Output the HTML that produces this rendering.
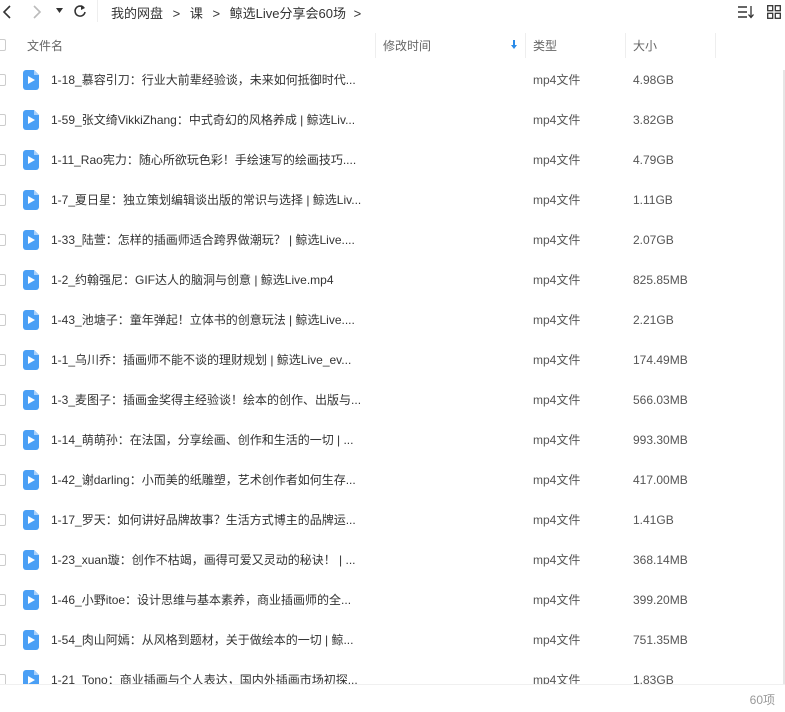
<!DOCTYPE html>
<html><head><meta charset="utf-8"><style>
*{margin:0;padding:0;box-sizing:border-box}
body{width:785px;height:712px;overflow:hidden;background:#fff;font-family:"Liberation Sans","Noto Sans CJK SC",sans-serif;color:#333;position:relative}
.top{position:absolute;top:0;left:0;right:0;height:24px;font-size:13px}
.hdr{position:absolute;top:33px;left:0;width:785px;height:25px;font-size:12px;color:#666}
.hdr span{position:absolute;top:4px;line-height:18px}
.sep{position:absolute;top:0;width:1px;height:25px;background:#eee}
.row{position:absolute;left:0;width:785px;height:40px;font-size:12px}
.row .cb{position:absolute;left:-6px;top:14px;width:12px;height:12px;border:1px solid #ccc;border-radius:2px}
.row svg{position:absolute;left:23px;top:10px}
.row span{position:absolute;top:11px;line-height:18px;height:18px}
.row .n{left:51px;color:#333}
.row .t{left:533px;color:#555}
.row .s{left:633px;color:#555}
.foot{position:absolute;left:0;top:684px;width:785px;height:28px;background:#fff;border-top:1px solid #f0f0f0}
</style></head><body>
<div class="top">
<svg style="position:absolute;left:2px;top:4px" width="10" height="16"><path d="M8 2L2 8L8 14" stroke="#333" stroke-width="1.6" fill="none"/></svg>
<svg style="position:absolute;left:32px;top:4px" width="10" height="16"><path d="M2 2L8 8L2 14" stroke="#bbb" stroke-width="1.6" fill="none"/></svg>
<svg style="position:absolute;left:56px;top:8px" width="8" height="6"><path d="M0 0H7L3.5 5Z" fill="#333"/></svg>
<svg style="position:absolute;left:73px;top:4px" width="14" height="14"><path d="M11 4A5 5 0 1 0 12 8" stroke="#333" stroke-width="1.6" fill="none"/><path d="M8 1L12 4L8 6" fill="#333"/></svg>
<div style="position:absolute;left:97px;top:0;width:1px;height:22px;background:#eee"></div>
<span style="position:absolute;left:111px;top:3px">我的网盘 <b style="font-weight:normal;margin:0 6px">&gt;</b> 课 <b style="font-weight:normal;margin:0 6px">&gt;</b> 鲸选Live分享会60场 <b style="font-weight:normal;margin-left:4px">&gt;</b></span>
<svg style="position:absolute;left:738px;top:5px" width="16" height="14"><path d="M0 2H9M0 7H9M0 12H9" stroke="#333" stroke-width="1.4"/><path d="M13 1V12M10.5 9.5L13 12.5L15.5 9.5" stroke="#333" stroke-width="1.3" fill="none"/></svg>
<svg style="position:absolute;left:767px;top:5px" width="14" height="14"><rect x="0.7" y="0.7" width="5" height="5" stroke="#333" fill="none" stroke-width="1.3"/><rect x="8.3" y="0.7" width="5" height="5" stroke="#333" fill="none" stroke-width="1.3"/><rect x="0.7" y="8.3" width="5" height="5" stroke="#333" fill="none" stroke-width="1.3"/><rect x="8.3" y="8.3" width="5" height="5" stroke="#333" fill="none" stroke-width="1.3"/></svg>
</div>
<div class="hdr">
<div style="position:absolute;left:-6px;top:6px;width:12px;height:12px;border:1px solid #ccc;border-radius:2px"></div>
<span style="left:27px">文件名</span>
<div class="sep" style="left:375px"></div>
<span style="left:383px">修改时间</span>
<svg style="position:absolute;left:511px;top:7px" width="6" height="10"><path d="M3 0V6" stroke="#2a8be8" stroke-width="2"/><path d="M0 5H6L3 9Z" fill="#2a8be8"/></svg>
<div class="sep" style="left:525px"></div>
<span style="left:533px">类型</span>
<div class="sep" style="left:625px"></div>
<span style="left:633px">大小</span>
<div class="sep" style="left:715px"></div>
</div>
<div id="rows"></div>
<div class="foot"><span style="position:absolute;right:10px;top:6px;font-size:12px;color:#999">60项</span></div>
<div style="position:absolute;right:0;top:70px;width:2px;height:614px;background:#e6e6e6"></div>
<script>
var d=[["1-18_慕容引刀：行业大前辈经验谈，未来如何抵御时代...","4.98GB"],["1-59_张文绮VikkiZhang：中式奇幻的风格养成 | 鲸选Liv...","3.82GB"],["1-11_Rao宪力：随心所欲玩色彩！手绘速写的绘画技巧....","4.79GB"],["1-7_夏日星：独立策划编辑谈出版的常识与选择 | 鲸选Liv...","1.11GB"],["1-33_陆萱：怎样的插画师适合跨界做潮玩？ | 鲸选Live....","2.07GB"],["1-2_约翰强尼：GIF达人的脑洞与创意 | 鲸选Live.mp4","825.85MB"],["1-43_池塘子：童年弹起！立体书的创意玩法 | 鲸选Live....","2.21GB"],["1-1_乌川乔：插画师不能不谈的理财规划 | 鲸选Live_ev...","174.49MB"],["1-3_麦图子：插画金奖得主经验谈！绘本的创作、出版与...","566.03MB"],["1-14_萌萌孙：在法国，分享绘画、创作和生活的一切 | ...","993.30MB"],["1-42_谢darling：小而美的纸雕塑，艺术创作者如何生存...","417.00MB"],["1-17_罗天：如何讲好品牌故事？生活方式博主的品牌运...","1.41GB"],["1-23_xuan璇：创作不枯竭，画得可爱又灵动的秘诀！ | ...","368.14MB"],["1-46_小野itoe：设计思维与基本素养，商业插画师的全...","399.20MB"],["1-54_肉山阿嫣：从风格到题材，关于做绘本的一切 | 鲸...","751.35MB"],["1-21_Tono：商业插画与个人表达，国内外插画市场初探...","1.83GB"]];
var h="";
d.forEach(function(r,i){h+='<div class="row" style="top:'+(60+i*40)+'px"><div class="cb"></div><svg width="16" height="20"><path d="M3 0H11L16 5V17A3 3 0 0 1 13 20H3A3 3 0 0 1 0 17V3A3 3 0 0 1 3 0Z" fill="#4a9ff5"/><path d="M11 0V5H16Z" fill="#a9d0fa"/><path d="M5 6L12 10L5 14Z" fill="#fff"/></svg><span class="n">'+r[0]+'</span><span class="t">mp4文件</span><span class="s">'+r[1]+'</span></div>';});
document.getElementById("rows").innerHTML=h;
</script>
</body></html>
